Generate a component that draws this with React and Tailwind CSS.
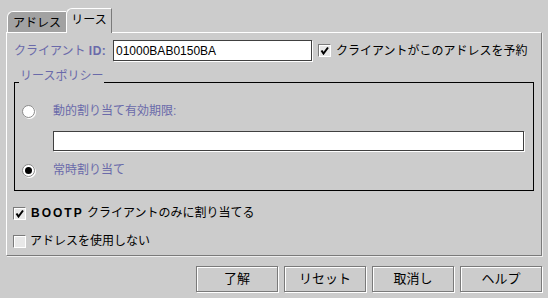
import React from 'react';

const Check = ({ checked }) => (
  <span className="w-[13px] h-[13px] shrink-0 bg-[#e8e8e8] border border-t-[#7a7a7a] border-l-[#7a7a7a] border-r-white border-b-white shadow-[inset_1px_1px_0_#fff] flex items-center justify-center">
    {checked && (
      <svg width="9" height="9" viewBox="0 0 9 9">
        <path d="M1.5 4.5 L3.5 7.5 L8 1.5" fill="none" stroke="#000" strokeWidth="2" />
      </svg>
    )}
  </span>
);

const Radio = ({ checked }) => (
  <span className="w-[13px] h-[13px] shrink-0 rounded-full bg-white border border-[#8a8a8a] shadow-[1px_1px_0_#fff] flex items-center justify-center">
    {checked && <span className="w-[7px] h-[7px] rounded-full bg-black" />}
  </span>
);

const Button = ({ children }) => (
  <button className="w-[82px] h-[26px] bg-[#cccccc] border border-[#7a7a7a] shadow-[inset_1px_1px_0_#fff,1px_1px_0_#fff] flex items-center justify-center text-[13px] text-black">
    {children}
  </button>
);

export default function App() {
  return (
    <div className="w-[548px] h-[298px] bg-[#cccccc] flex flex-col text-[12px] text-black font-['Liberation_Sans','Noto_Sans_CJK_JP',sans-serif] overflow-hidden">
      {/* tabs */}
      <div className="flex items-end h-[32px] pl-[7px] relative z-10">
        <div className="h-[21px] w-[59px] bg-[#a2a2a2] border-t border-l border-white rounded-tl-[6px] flex items-center justify-center pt-[1px]">
          アドレス
        </div>
        <div className="h-[25px] w-[46px] -mb-px bg-[#cccccc] border-t border-l border-r border-t-white border-l-white border-r-[#7a7a7a] rounded-tl-[6px] flex items-center justify-center pb-[2px]">
          リース
        </div>
      </div>

      {/* panel */}
      <div className="mx-[6px] w-[536px] h-[224px] border border-t-white border-l-white border-r-[#7a7a7a] border-b-[#7a7a7a] shadow-[1px_1px_0_#eeeeee] flex flex-col">
        <div className="flex items-center mt-[7px] h-[21px] pl-[7px]">
          <span className="w-[99px] text-[#6a6aaa]">
            クライアント <span className="font-bold tracking-[0.5px]">ID:</span>
          </span>
          <div className="w-[199px] h-[21px] bg-white border border-[#404040] shadow-[1px_1px_0_#fff] flex items-center px-[2px] text-[12px]">
            01000BAB0150BA
          </div>
          <span className="ml-[6px]"><Check checked /></span>
          <span className="ml-[5px]">クライアントがこのアドレスを予約</span>
        </div>

        <div className="relative mt-[21px] ml-[7px] w-[520px] h-[109px] border border-black flex flex-col">
          <span className="absolute top-[-15px] left-[4px] px-[1px] leading-[16px] bg-[#cccccc] text-[#6a6aaa]">
            リースポリシー
          </span>
          <div className="flex items-center mt-[18px] h-[20px] pl-[7px]">
            <Radio />
            <span className="ml-[18px] text-[#6a6aaa]">動的割り当て有効期限:</span>
          </div>
          <div className="mt-[10px] ml-[38px] w-[471px] h-[20px] bg-white border border-[#404040] shadow-[1px_1px_0_#fff]" />
          <div className="flex items-center mt-[9px] h-[20px] pl-[7px]">
            <Radio checked />
            <span className="ml-[18px] text-[#6a6aaa]">常時割り当て</span>
          </div>
        </div>

        <div className="flex items-center mt-[12px] h-[20px] pl-[6px]">
          <Check checked />
          <span className="ml-[5px]">
            <span className="font-bold tracking-[2px]">BOOTP</span> クライアントのみに割り当てる
          </span>
        </div>
        <div className="flex items-center mt-[8px] h-[20px] pl-[6px]">
          <Check />
          <span className="ml-[4px]">アドレスを使用しない</span>
        </div>
      </div>

      {/* buttons */}
      <div className="flex justify-end gap-[6px] mt-[10px] pr-[6px]">
        <Button>了解</Button>
        <Button>リセット</Button>
        <Button>取消し</Button>
        <Button>ヘルプ</Button>
      </div>
    </div>
  );
}
